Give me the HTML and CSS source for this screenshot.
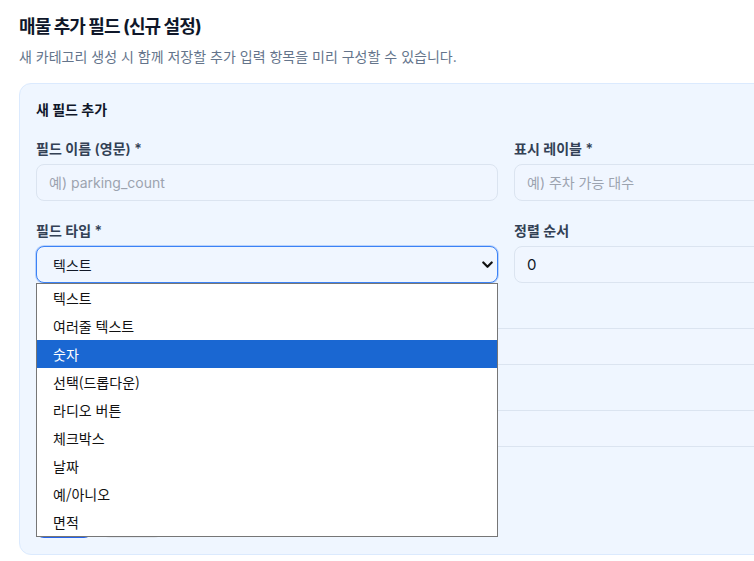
FILE: index.html
```html
<!DOCTYPE html>
<html lang="ko">
<head>
<meta charset="utf-8">
<title>매물 추가 필드</title>
<link rel="stylesheet" href="styles.css">
</head>
<body>
<div class="page">
  <h1 class="title">매물 추가 필드 (신규 설정)</h1>
  <p class="subtitle">새 카테고리 생성 시 함께 저장할 추가 입력 항목을 미리 구성할 수 있습니다.</p>

  <section class="card">
    <h2 class="card-title">새 필드 추가</h2>
    <div class="grid">
      <div class="field">
        <label class="label">필드 이름 (영문) *</label>
        <input class="input" type="text" placeholder="예) parking_count">
      </div>
      <div class="field">
        <label class="label">표시 레이블 *</label>
        <input class="input" type="text" placeholder="예) 주차 가능 대수">
      </div>
      <div class="field">
        <label class="label">필드 타입 *</label>
        <div class="select-wrap">
          <div class="select">
            <span>텍스트</span>
            <svg class="chevron" width="11" height="8" viewBox="0 0 11 8"><path d="M1.3 1.5 L5.5 5.8 L9.7 1.5" fill="none" stroke="#111" stroke-width="2.2" stroke-linecap="round" stroke-linejoin="round"/></svg>
          </div>
          <ul class="dropdown">
            <li class="option">텍스트</li>
            <li class="option">여러줄 텍스트</li>
            <li class="option option-active">숫자</li>
            <li class="option">선택(드롭다운)</li>
            <li class="option">라디오 버튼</li>
            <li class="option">체크박스</li>
            <li class="option">날짜</li>
            <li class="option">예/아니오</li>
            <li class="option">면적</li>
          </ul>
        </div>
      </div>
      <div class="field">
        <label class="label">정렬 순서</label>
        <input class="input input-value" type="text" value="0">
      </div>
      <div class="field field-wide">
        <label class="label">선택 옵션 (쉼표로 구분)</label>
        <input class="input" type="text" placeholder="">
      </div>
      <div class="field field-wide">
        <label class="label">도움말</label>
        <input class="input" type="text" placeholder="">
      </div>
    </div>
    <div class="check-row">
      <span class="checkbox"></span>
      <span class="check-label">필수 입력</span>
    </div>
    <div class="actions">
      <button class="btn btn-primary">추가</button>
      <button class="btn btn-secondary">초기화</button>
    </div>
  </section>
</div>
</body>
</html>
```

FILE: styles.css
```css
html, body {
  margin: 0;
  padding: 0;
  overflow: hidden;
  background: #ffffff;
}

body {
  font-family: Inter, "Noto Sans CJK KR", sans-serif;
  color: #0f172a;
}

.page {
  padding: 14px 0 0 19px;
  width: 976px;
}

.title {
  margin: 0;
  font-size: 18px;
  line-height: 26px;
  font-weight: 700;
  letter-spacing: -0.9px;
  color: #0f172a;
}

.subtitle {
  margin: 7px 0 0;
  font-size: 14px;
  line-height: 20px;
  color: #64748b;
}

.card {
  margin-top: 16px;
  border: 1px solid #dbeafe;
  border-radius: 12px;
  background: #eff6ff;
  padding: 16px 16px 16px 16px;
}

.card-title {
  margin: 0 0 19px;
  font-size: 14px;
  line-height: 20px;
  font-weight: 700;
  color: #0f172a;
}

.grid {
  display: grid;
  grid-template-columns: 462px 462px;
  column-gap: 16px;
  row-gap: 20px;
}

.field {
  display: flex;
  flex-direction: column;
}

.field-wide {
  grid-column: span 2;
}

.label {
  display: block;
  font-size: 14px;
  line-height: 20px;
  font-weight: 600;
  color: #334155;
  margin-bottom: 5px;
}

.input {
  box-sizing: border-box;
  height: 37px;
  width: 100%;
  border: 1px solid #dbe4f0;
  border-radius: 8px;
  background: #f0f6ff;
  padding: 0 12px;
  font-family: Inter, "Noto Sans CJK KR", sans-serif;
  font-size: 14px;
  color: #111827;
  outline: none;
}

.input::placeholder {
  color: #9ca3af;
}

.input-value {
  font-size: 15px;
}

.select-wrap {
  position: relative;
}

.select {
  box-sizing: border-box;
  height: 37px;
  border: 1px solid #3b82f6;
  border-radius: 8px;
  box-shadow: 0 0 0 1px rgba(59, 130, 246, 0.3);
  background: #f0f6ff;
  padding: 0 4px 0 16px;
  display: flex;
  align-items: center;
  justify-content: space-between;
  font-size: 14px;
  color: #111827;
}

.chevron {
  display: block;
}

.dropdown {
  position: absolute;
  left: 0;
  right: 0;
  top: 100%;
  margin: 0;
  padding: 0;
  list-style: none;
  background: #ffffff;
  border: 1px solid #767676;
  z-index: 10;
}

.option {
  height: 28px;
  line-height: 28px;
  padding-left: 16px;
  font-family: "Noto Sans CJK KR", sans-serif;
  font-size: 14px;
  color: #111111;
}

.option-active {
  background: #1a67d2;
  color: #ffffff;
}

.check-row {
  margin-top: 20px;
  height: 20px;
  display: flex;
  align-items: center;
  gap: 8px;
  font-size: 14px;
  color: #334155;
}

.checkbox {
  width: 14px;
  height: 14px;
  border: 1px solid #94a3b8;
  border-radius: 3px;
  background: #fff;
}

.actions {
  margin-top: 16px;
  display: flex;
  gap: 10px;
}

.btn {
  height: 35px;
  border: none;
  border-radius: 8px;
  font-family: Inter, "Noto Sans CJK KR", sans-serif;
  font-size: 14px;
  font-weight: 600;
  padding: 0;
}

.btn-primary {
  width: 56px;
  background: #2563eb;
  color: #fff;
}

.btn-secondary {
  width: 60px;
  background: #e2e8f0;
  color: #334155;
}
```
